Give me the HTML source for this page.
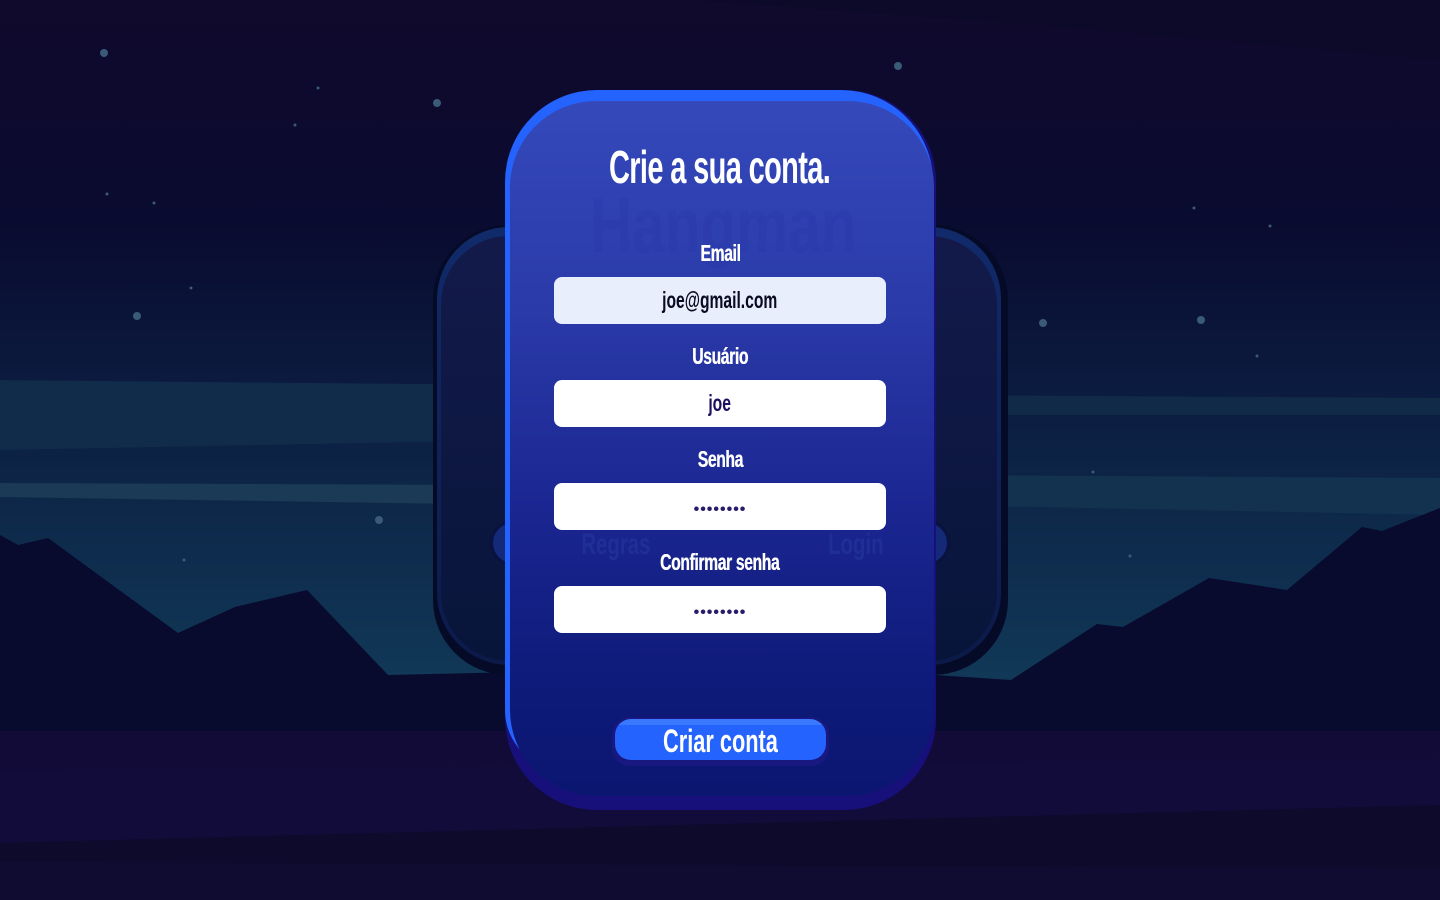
<!DOCTYPE html>
<html><head><meta charset="utf-8"><style>
*{margin:0;padding:0;box-sizing:border-box}
html,body{width:1440px;height:900px;overflow:hidden;background:#0e0a2c;font-family:"Liberation Sans",sans-serif}
.abs{position:absolute}
.t{display:inline-block;transform:scaleX(.68);font-weight:bold;white-space:nowrap}
.lbl{position:absolute;left:505px;width:430px;text-align:center;color:#fff;font-size:23px;letter-spacing:-0.5px;text-shadow:0.5px 0 0 #fff}
.inp{position:absolute;left:554px;width:332px;height:47px;border-radius:8px;background:#fff;text-align:center;line-height:47px;color:#1b1060;font-size:23px}
.dots{color:#2a1a6a;font-size:16px;letter-spacing:1px;line-height:47px;font-weight:bold}
</style></head><body>
<svg class="abs" style="left:0;top:0" width="1440" height="900">
<defs>
<linearGradient id="sky" x1="0" y1="0" x2="0" y2="1">
<stop offset="0" stop-color="#100a2c"/><stop offset=".25" stop-color="#0a0b30"/><stop offset=".42" stop-color="#0b1a3e"/><stop offset=".6" stop-color="#0e2b4c"/><stop offset=".8" stop-color="#123c5a"/><stop offset="1" stop-color="#123c5a"/>
</linearGradient>
</defs>
<rect width="1440" height="900" fill="url(#sky)"/>
<polygon points="700,0 1440,0 1440,60 1100,30" fill="#0c0828" opacity=".7"/>
<polygon points="0,380 520,385 520,440 0,450" fill="#13304e" opacity=".8"/>
<polygon points="0,483 520,485 520,505 0,497" fill="#1a3a55"/>
<polygon points="930,395 1440,398 1440,415 930,415" fill="#102a48"/>
<polygon points="930,475 1440,478 1440,515 930,505" fill="#13324f"/>
<polygon points="0,535 18,545 48,538 178,633 235,607 307,590 388,675 520,672 520,700 935,700 935,675 1011,680 1097,624 1123,627 1209,578 1287,590 1362,527 1382,531 1440,508 1440,900 0,900" fill="#080a2e"/>
<rect x="0" y="731" width="1440" height="169" fill="#120b38"/>
<polygon points="0,770 1440,758 1440,805 0,843" fill="#110c3a"/>
<polygon points="0,843 1440,805 1440,900 0,900" fill="#0e0a2c"/>
<polygon points="0,862 1440,868 1440,900 0,900" fill="#100b30"/>
<g fill="#3a5a78">
<circle cx="104" cy="53" r="4"/><circle cx="437" cy="103" r="4"/><circle cx="898" cy="66" r="4"/><circle cx="137" cy="316" r="4"/><circle cx="1043" cy="323" r="4"/><circle cx="1201" cy="320" r="4"/><circle cx="379" cy="520" r="4"/>
<circle cx="318" cy="88" r="1.5"/><circle cx="295" cy="125" r="1.5"/><circle cx="107" cy="194" r="1.5"/><circle cx="154" cy="203" r="1.5"/><circle cx="191" cy="288" r="1.5"/><circle cx="1194" cy="208" r="1.5"/><circle cx="1270" cy="226" r="1.5"/><circle cx="1257" cy="356" r="1.5"/><circle cx="1093" cy="472" r="1.5"/><circle cx="1130" cy="556" r="1.5"/><circle cx="184" cy="560" r="1.5"/>
</g>
</svg>
<!-- back card -->
<div class="abs" style="left:433px;top:225px;width:575px;height:450px;border-radius:75px;background:#050a26"></div>
<div class="abs" style="left:437px;top:227px;width:564px;height:438px;border-radius:72px;background:linear-gradient(#112a6a,#0c1a4a);"></div>
<div class="abs" style="left:441px;top:236px;width:556px;height:425px;border-radius:68px;background:linear-gradient(#131a4a,#08153a)"></div>
<div class="abs" style="left:490px;top:520px;width:460px;height:46px;border-radius:23px;background:#142a78;border:3px solid #0a1240"></div>
<!-- main card -->
<div class="abs" style="left:505px;top:90px;width:431px;height:720px;border-radius:92px;background:#17107a"></div>
<div class="abs" style="left:505px;top:90px;width:428px;height:680px;border-radius:92px 92px 60px 60px;background:#2563ff"></div>
<div class="abs" style="left:510px;top:101px;width:424px;height:695px;border-radius:86px;background:linear-gradient(#3549bb 0%,#2a3aa8 30%,#1a2590 60%,#0e1a78 85%,#0a1670 100%)"></div>
<div class="abs" style="left:590px;top:180px;color:rgba(40,55,170,.35);font-size:78px"><span class="t" style="transform:scaleX(.75);transform-origin:left">Hangman</span></div>
<div class="abs" style="left:565px;top:528px;color:#2636a0;font-size:30px;opacity:.6"><span class="t">Regras</span></div>
<div class="abs" style="left:815px;top:528px;color:#2636a0;font-size:30px;opacity:.6"><span class="t">Login</span></div>
<div class="abs" style="left:505px;top:140px;width:430px;text-align:center;color:#fff;font-size:46px;letter-spacing:-1px"><span class="t" style="transform:scaleX(.63)">Crie a sua conta.</span></div>
<div class="lbl" style="top:240px"><span class="t">Email</span></div>
<div class="inp" style="top:277px;background:#e8eefc;color:#0a0a20"><span class="t">joe@gmail.com</span></div>
<div class="lbl" style="top:343px"><span class="t">Usuário</span></div>
<div class="inp" style="top:380px"><span class="t">joe</span></div>
<div class="lbl" style="top:446px"><span class="t">Senha</span></div>
<div class="inp" style="top:483px"><span class="dots">••••••••</span></div>
<div class="lbl" style="top:549px"><span class="t">Confirmar senha</span></div>
<div class="inp" style="top:586px"><span class="dots">••••••••</span></div>
<div class="abs" style="left:612px;top:717px;width:217px;height:49px;border-radius:18px;background:#181880"></div>
<div class="abs" style="left:615px;top:719px;width:211px;height:41px;border-radius:16px;background:linear-gradient(#3a78ff 0,#3a78ff 14%,#2563ff 15%);text-align:center;color:#fff;font-size:32px;line-height:44px"><span class="t">Criar conta</span></div>
</body></html>
